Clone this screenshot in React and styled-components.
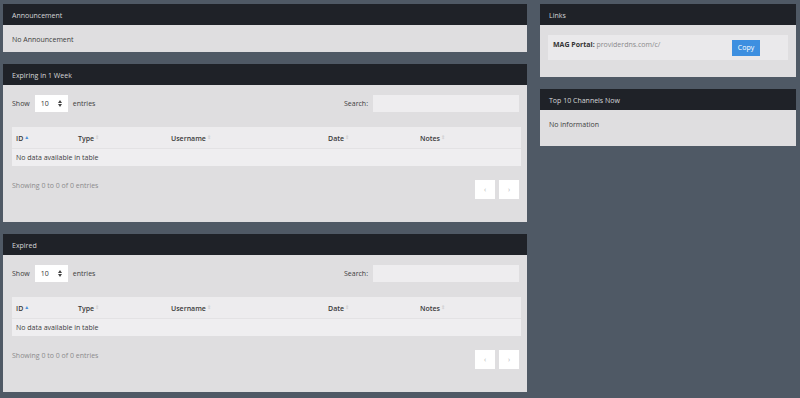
import React from 'react';
import styled, { createGlobalStyle } from 'styled-components';

const Global = createGlobalStyle`
  html, body {
    margin: 0;
    background: #4f5965;
  }
  body {
    font-family: "Open Sans", "Liberation Sans", sans-serif;
    font-size: 7px;
    color: #3d3d3d;
  }
`;

const Page = styled.div`
  display: grid;
  grid-template-columns: 524px 256px;
  column-gap: 13px;
  padding: 4px 4px 0 3px;
  align-items: start;
  height: 398px;
  box-sizing: border-box;
`;

const Column = styled.div`
  display: flex;
  flex-direction: column;
  gap: 12px;
`;

const Card = styled.section`
  background: #dfdee0;
`;

const CardHeader = styled.div`
  height: 21px;
  background: #1f2228;
  color: #d6d7d9;
  padding: 1px 0 0 9px;
  box-sizing: border-box;
  display: flex;
  align-items: center;
`;

const CardBody = styled.div`
  padding: ${p => p.$pad || '10px 9px 7px 9px'};
  line-height: 10px;
  min-height: ${p => p.$min || 0}px;
  box-sizing: border-box;
`;

const Controls = styled.div`
  display: flex;
  align-items: center;
  justify-content: space-between;
  height: 17px;
  padding-right: 2px;
`;

const Group = styled.div`
  display: flex;
  align-items: center;
  gap: 5px;
  padding-top: 1px;
`;

const SelectBox = styled.div`
  width: 33px;
  height: 17px;
  margin-top: -1px;
  background: #fff;
  display: flex;
  align-items: center;
  justify-content: space-between;
  padding: 0 6px 0 6px;
  box-sizing: border-box;
  color: #333;
`;

const SearchInput = styled.div`
  width: 146px;
  height: 17px;
  margin-top: -1px;
  background: #eeedef;
`;

const Table = styled.table`
  width: 509px;
  margin-top: 15px;
  border-collapse: collapse;
  table-layout: fixed;
`;

const Th = styled.th`
  height: 21px;
  box-sizing: border-box;
  background: #edecee;
  text-align: left;
  font-weight: 600;
  color: #3a3a3a;
  padding: 1px 0 0 4px;
  border-bottom: 1px solid #e3e2e4;
`;

const Sort = styled.span`
  color: ${p => (p.$active ? '#4a90d9' : '#d2d2d4')};
  font-size: 5px;
  margin-left: 1px;
  vertical-align: 2px;
`;

const Td = styled.td`
  height: 18px;
  box-sizing: border-box;
  background: #efeef0;
  padding: 1px 0 0 4px;
  color: #3d3d3d;
`;

const Footer = styled.div`
  display: flex;
  justify-content: space-between;
  align-items: flex-start;
  margin-top: 14px;
  padding-right: 2px;
`;

const Info = styled.div`
  color: #8b8b8d;
  line-height: 10px;
  padding-top: 1px;
`;

const Pager = styled.div`
  display: flex;
  gap: 4px;
`;

const PageBtn = styled.div`
  width: 20px;
  height: 19px;
  background: #fff;
  color: #b4b4b6;
  display: flex;
  align-items: center;
  justify-content: center;
  font-size: 7px;
`;

const LinkBox = styled.div`
  background: #eae9eb;
  height: 25px;
  display: flex;
  align-items: center;
  padding: 0 28px 0 5px;
  box-sizing: border-box;
`;

const LinkText = styled.div`
  color: #8a8a8c;
  margin-top: -5px;
  b {
    color: #333;
    font-weight: 700;
  }
`;

const CopyButton = styled.button`
  margin-left: auto;
  width: 28px;
  height: 16px;
  border: none;
  background: #3d8fe0;
  color: #fff;
  font-family: inherit;
  font-size: 7px;
  padding: 0;
`;

const SelectArrows = () => (
  <svg width="4" height="7" viewBox="0 0 4 7">
    <path d="M0 3 L2 0 L4 3 Z M0 4 L2 7 L4 4 Z" fill="#444" />
  </svg>
);

const columns = [
  { name: 'ID', w: 62, active: true },
  { name: 'Type', w: 93 },
  { name: 'Username', w: 157 },
  { name: 'Date', w: 92 },
  { name: 'Notes', w: 105 },
];

const DataTableCard = ({ title }) => (
  <Card>
    <CardHeader>{title}</CardHeader>
    <CardBody $pad="10px 6px 23px 9px" $min={137}>
      <Controls>
        <Group>
          <span>Show</span>
          <SelectBox>
            <span>10</span>
            <SelectArrows />
          </SelectBox>
          <span>entries</span>
        </Group>
        <Group>
          <span>Search:</span>
          <SearchInput />
        </Group>
      </Controls>
      <Table>
        <colgroup>
          {columns.map(c => <col key={c.name} style={{ width: c.w }} />)}
        </colgroup>
        <thead>
          <tr>
            {columns.map(c => (
              <Th key={c.name}>
                {c.name}
                <Sort $active={c.active}>{c.active ? '▲' : '⇕'}</Sort>
              </Th>
            ))}
          </tr>
        </thead>
        <tbody>
          <tr>
            <Td colSpan={5}>No data available in table</Td>
          </tr>
        </tbody>
      </Table>
      <Footer>
        <Info>Showing 0 to 0 of 0 entries</Info>
        <Pager>
          <PageBtn>‹</PageBtn>
          <PageBtn>›</PageBtn>
        </Pager>
      </Footer>
    </CardBody>
  </Card>
);

export default function App() {
  return (
    <>
      <Global />
      <Page>
        <Column>
          <Card>
            <CardHeader>Announcement</CardHeader>
            <CardBody $min={27}>No Announcement</CardBody>
          </Card>
          <DataTableCard title="Expiring in 1 Week" />
          <DataTableCard title="Expired" />
        </Column>
        <Column>
          <Card>
            <CardHeader>Links</CardHeader>
            <CardBody $pad="10px 8px 17px 8px" $min={52}>
              <LinkBox>
                <LinkText><b>MAG Portal:</b> providerdns.com/c/</LinkText>
                <CopyButton>Copy</CopyButton>
              </LinkBox>
            </CardBody>
          </Card>
          <Card>
            <CardHeader>Top 10 Channels Now</CardHeader>
            <CardBody $min={36}>No information</CardBody>
          </Card>
        </Column>
      </Page>
    </>
  );
}
